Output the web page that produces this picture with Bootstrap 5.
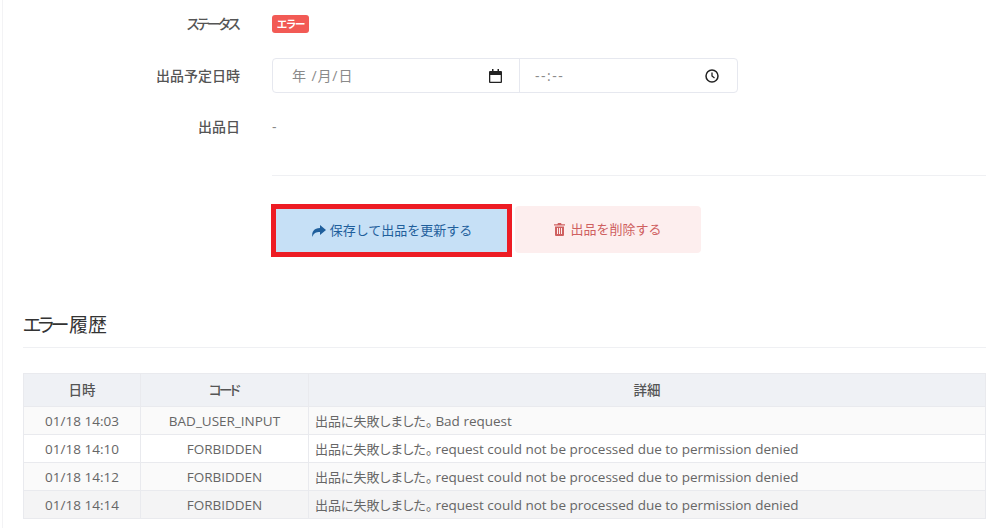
<!DOCTYPE html>
<html lang="ja">
<head>
<meta charset="utf-8">
<title>エラー履歴</title>
<link href="https://cdn.jsdelivr.net/npm/bootstrap@5.3.0/dist/css/bootstrap.min.css" rel="stylesheet">
<style>
html,body{height:528px;overflow:hidden}
body{font-family:"Open Sans","Noto Sans CJK JP",sans-serif;font-size:14px;color:#555;background:#fff;font-feature-settings:"palt"}
.page-shell{margin-left:2px;border-left:1px solid #f3f3f5;padding:0 14px 0 20px;height:528px}
.form-line{display:flex;align-items:center}
.line-a{height:47px}
.line-b{height:35px;margin-top:11px}
.line-c{height:46px;margin-top:10px}
.field-label{width:217px;text-align:right;font-weight:500;color:#555;font-size:14px;flex:none}
.kana-tight{letter-spacing:-2.500px;margin-right:2px}
.field-value{margin-left:32px}
.tag-wrap{margin-bottom:2px}
.err-tag{display:inline-block;background:#f25a55;color:#fff;font-size:10.500px;font-weight:700;line-height:18px;height:18px;padding:0 5px;border-radius:3px;letter-spacing:-.8px}
.dt-group{display:flex;width:466px;height:35px;border:1px solid #e6e8ef;border-radius:4px;background:#fff;color:#8a8a8a}
.dt-cell{display:flex;align-items:center;justify-content:space-between}
.dt-date{width:247px;padding:0 17px 0 19px;border-right:1px solid #e6e8ef}
.dt-date span{letter-spacing:.9px}
.dt-time{flex:1;padding:0 18px 0 15px}
.dt-time span{letter-spacing:1.500px}
.dash-val{color:#888}
.rule-one{margin:26px 0 0 249px;border-top:1px solid #eff0f3}
.btn-line{display:flex;align-items:flex-start;margin:28px 0 0 248px;height:53px}
.save-frame{border:5px solid #ed1c24;width:241px;height:53px}
.save-btn{width:100%;height:100%;border:0;border-radius:0;background:#c6e0f6;color:#1f5f9c;font-size:13px;font-weight:400;display:flex;align-items:center;justify-content:center;gap:4px;padding:0}
.del-btn{margin:2px 0 0 3px;width:186px;height:47px;border:0;border-radius:4px;background:#fdeeee;color:#cf6060;font-size:13px;font-weight:400;display:flex;align-items:center;justify-content:center;gap:5px;padding:0}
.hist-title{font-size:19px;font-weight:400;color:#333;margin:0;padding-top:54px;line-height:28px}
.title-kana{letter-spacing:-3.500px;margin-right:3px}
.rule-two{margin:8px 0 0;border-top:1px solid #eff0f3}
.hist-table{margin:25px 0 0;width:963px;border-collapse:collapse;table-layout:fixed;font-size:13.500px;color:#666}
.hist-table th,.hist-table td{border:1px solid #e9eaee;padding:0;box-shadow:none;vertical-align:middle}
.hist-table th{height:33px;background:#eff1f5;text-align:center;font-weight:500;color:#555;font-size:13.500px;border-bottom:0}
.hist-table td{height:28px;text-align:center;color:#666;padding-top:2px}
.hist-table td.msg{text-align:left;padding-left:6px}
.msg-cjk{font-size:13px;margin-right:3px}
.hist-table tr.t-a td{background:#fafafa}
.hist-table tr.t-b td{background:#fff}
.hist-table tr.t-c td{background:#f4f4f5}
</style>
</head>
<body>
<div class="page-shell">
  <div class="form-line line-a">
    <div class="field-label"><span class="kana-tight">ステータス</span></div>
    <div class="field-value tag-wrap"><span class="err-tag">エラー</span></div>
  </div>
  <div class="form-line line-b">
    <div class="field-label">出品予定日時</div>
    <div class="field-value dt-group">
      <div class="dt-cell dt-date"><span>年 /月/日</span>
        <svg width="13" height="14" viewBox="0 0 13 14"><path d="M3 0h1.500v2h4V0H10v2h2a1 1 0 0 1 1 1v10a1 1 0 0 1-1 1H1a1 1 0 0 1-1-1V3a1 1 0 0 1 1-1h2zM1.300 6v6.700h10.400V6z" fill="#222" fill-rule="evenodd"/></svg>
      </div>
      <div class="dt-cell dt-time"><span>--:--</span>
        <svg width="14" height="14" viewBox="0 0 14 14"><circle cx="7" cy="7" r="6" fill="none" stroke="#222" stroke-width="1.500"/><path d="M7 3.500V7l2.500 2" fill="none" stroke="#222" stroke-width="1.300"/></svg>
      </div>
    </div>
  </div>
  <div class="form-line line-c">
    <div class="field-label">出品日</div>
    <div class="field-value dash-val">-</div>
  </div>
  <div class="rule-one"></div>
  <div class="btn-line">
    <div class="save-frame">
      <button type="button" class="btn save-btn">
        <svg width="15" height="12" viewBox="0 0 15 12"><path d="M9 0l6 5-6 5V7C5 7 2.500 8 1.500 12 .3 7 3 3.200 9 3z" fill="#1f5f9c"/></svg>保存して出品を更新する
      </button>
    </div>
    <button type="button" class="btn del-btn">
      <svg width="11" height="13" viewBox="0 0 11 13"><path d="M4 0h3l.6 1.200H11v1.300H0V1.200h3.400zM1 3.500h9V12a1 1 0 0 1-1 1H2a1 1 0 0 1-1-1zM3 5v6h1V5zm2 0v6h1V5zm2 0v6h1V5z" fill="#cf6060" fill-rule="evenodd"/></svg>出品を削除する
    </button>
  </div>
  <h2 class="hist-title"><span class="title-kana">エラー</span>履歴</h2>
  <div class="rule-two"></div>
  <table class="table hist-table">
    <colgroup><col style="width:117px"><col style="width:168px"><col></colgroup>
    <thead><tr><th>日時</th><th><span class="kana-tight">コード</span></th><th>詳細</th></tr></thead>
    <tbody>
      <tr class="t-a"><td>01/18 14:03</td><td>BAD_USER_INPUT</td><td class="msg"><span class="msg-cjk">出品に失敗しました。</span>Bad request</td></tr>
      <tr class="t-b"><td>01/18 14:10</td><td>FORBIDDEN</td><td class="msg"><span class="msg-cjk">出品に失敗しました。</span>request could not be processed due to permission denied</td></tr>
      <tr class="t-a"><td>01/18 14:12</td><td>FORBIDDEN</td><td class="msg"><span class="msg-cjk">出品に失敗しました。</span>request could not be processed due to permission denied</td></tr>
      <tr class="t-c"><td>01/18 14:14</td><td>FORBIDDEN</td><td class="msg"><span class="msg-cjk">出品に失敗しました。</span>request could not be processed due to permission denied</td></tr>
    </tbody>
  </table>
</div>
<script src="https://cdn.jsdelivr.net/npm/bootstrap@5.3.0/dist/js/bootstrap.bundle.min.js"></script>
</body>
</html>
